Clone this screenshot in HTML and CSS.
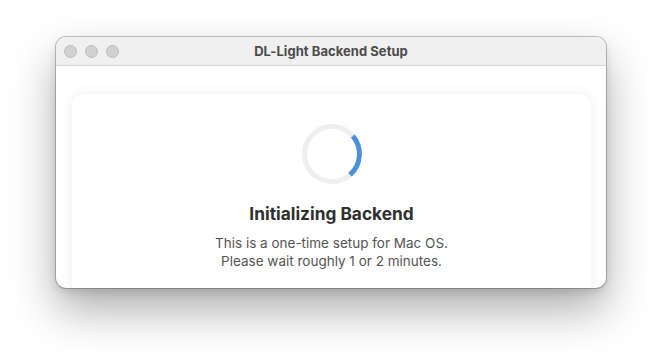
FILE: index.html
```html
<!DOCTYPE html>
<html>
<head>
<meta charset="utf-8">
<link rel="stylesheet" href="styles.css">
</head>
<body>
<div class="window">
  <div class="titlebar">
    <div class="lights">
      <span class="light"></span>
      <span class="light"></span>
      <span class="light"></span>
    </div>
    <div class="title">DL-Light Backend Setup</div>
  </div>
  <div class="content">
    <div class="card">
      <div class="spinner"></div>
      <h1 class="heading">Initializing Backend</h1>
      <p class="desc">This is a one-time setup for Mac OS.<br>Please wait roughly 1 or 2 minutes.</p>
    </div>
  </div>
</div>
</body>
</html>
```
FILE: styles.css
```css
html, body {
  margin: 0;
  padding: 0;
  background: #ffffff;
  font-family: Inter, "Noto Sans", sans-serif;
}
html {
  height: 100%;
}
body {
  min-height: 100%;
  box-sizing: border-box;
  padding: 37px 0 0 56px;
}
.window {
  width: 550px;
  height: 251px;
  border-radius: 10px;
  overflow: hidden;
  background: #ffffff;
  box-shadow: 0 0 0 1px rgba(0,0,0,0.22), 0 22px 45px rgba(0,0,0,0.32), 0 4px 10px rgba(0,0,0,0.12);
  display: flex;
  flex-direction: column;
}
.titlebar {
  height: 28px;
  flex: none;
  background: #f0f0f0;
  border-bottom: 1px solid #d6d6d6;
  display: flex;
  align-items: center;
  position: relative;
}
.lights {
  display: flex;
  gap: 8px;
  padding-left: 8px;
}
.light {
  width: 11px;
  height: 11px;
  border-radius: 50%;
  background: #d1d1d1;
  border: 0.5px solid #bcbcbc;
}
.title {
  position: absolute;
  left: 0;
  right: 0;
  text-align: center;
  font-size: 13px;
  font-weight: 700;
  color: #4b4b4b;
  letter-spacing: 0.05px;
}
.content {
  flex: 1;
  padding: 28px 15px 0 16px;
  min-height: 0;
}
.card {
  height: 240px;
  background: #ffffff;
  border-radius: 12px;
  box-shadow: 0 0 14px rgba(0,0,0,0.07);
  display: flex;
  flex-direction: column;
  align-items: center;
  padding-top: 30px;
  box-sizing: border-box;
}
.spinner {
  width: 60px;
  height: 60px;
  box-sizing: border-box;
  border-radius: 50%;
  border: 5px solid #efefef;
  border-right-color: #4a8fd9;
  transform: rotate(4deg);
}
.heading {
  margin: 19px 0 0;
  font-size: 17.3px;
  font-weight: 700;
  color: #2f2f2f;
  line-height: 22px;
}
.desc {
  margin: 9px 0 0;
  font-size: 13.5px;
  line-height: 18px;
  color: #555555;
  text-align: center;
}
```
